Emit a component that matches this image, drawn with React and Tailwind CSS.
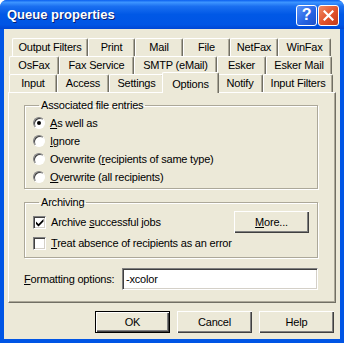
const rows = [
  {
    offset: "ml-[8px]",
    tabs: [
      { label: "Output Filters", w: "w-[76px]" },
      { label: "Print", w: "w-[47px]" },
      { label: "Mail", w: "w-[48px]" },
      { label: "File", w: "w-[47px]" },
      { label: "NetFax", w: "w-[48px]" },
      { label: "WinFax", w: "w-[53px]" },
    ],
  },
  {
    offset: "ml-[5px]",
    tabs: [
      { label: "OsFax", w: "w-[50px]" },
      { label: "Fax Service", w: "w-[75px]" },
      { label: "SMTP (eMail)", w: "w-[83px]" },
      { label: "Esker", w: "w-[49px]" },
      { label: "Esker Mail", w: "w-[66px]" },
    ],
  },
  {
    offset: "ml-[5px]",
    tabs: [
      { label: "Input", w: "w-[48px]" },
      { label: "Access", w: "w-[52px]" },
      { label: "Settings", w: "w-[55px]" },
      { label: "Options", w: "w-[57px]", active: true },
      { label: "Notify", w: "w-[46px]" },
      { label: "Input Filters", w: "w-[70px]" },
    ],
  },
];

const Tab = ({ label, w, active }) => {
  if (active) {
    return (
      <div
        className={`${w} relative z-10 -mx-[2px] -mt-[2px] flex h-[21px] shrink-0 items-start justify-center rounded-t-[2px] border-l border-t border-r border-l-white border-t-white border-r-[#716F64] bg-[#ECE9D8] pt-[3px] shadow-[inset_-1px_0_0_#ACA899]`}
      >
        {label}
      </div>
    );
  }
  return (
    <div
      className={`${w} flex h-[18px] shrink-0 items-center justify-center rounded-t-[2px] border-l border-t border-r border-l-white border-t-white border-r-[#716F64] bg-[#ECE9D8] shadow-[inset_-1px_0_0_#ACA899]`}
    >
      {label}
    </div>
  );
};

const Radio = ({ checked }) => (
  <span className="flex h-[12px] w-[12px] shrink-0 items-center justify-center rounded-full border border-t-[#808080] border-l-[#808080] border-r-white border-b-white bg-white shadow-[inset_1px_1px_0_#404040]">
    {checked && <span className="h-[4px] w-[4px] rounded-full bg-black" />}
  </span>
);

const Checkbox = ({ checked }) => (
  <span className="flex h-[13px] w-[13px] shrink-0 items-center justify-center border border-t-[#808080] border-l-[#808080] border-r-white border-b-white bg-white shadow-[inset_1px_1px_0_#404040,inset_-1px_-1px_0_#D4D0C8]">
    {checked && (
      <svg width="9" height="9" viewBox="0 0 9 9">
        <path d="M1 3.5v2.5l2.5 2.5 5-5V1L3.5 6z" fill="#000" />
      </svg>
    )}
  </span>
);

const Button = ({ children, isDefault }) => (
  <button
    className={`flex h-[22px] w-[75px] items-center justify-center bg-[#ECE9D8] pt-[1px] ${
      isDefault
        ? "border border-black shadow-[inset_1px_1px_0_#fff,inset_-1px_-1px_0_#404040,inset_-2px_-2px_0_#808080]"
        : "shadow-[inset_1px_1px_0_#fff,inset_-1px_-1px_0_#404040,inset_-2px_-2px_0_#808080]"
    }`}
  >
    {children}
  </button>
);

const GroupBox = ({ title, className, children }) => (
  <fieldset
    className={`ml-[15px] w-[294px] border border-[#ACA899] shadow-[1px_1px_0_#fff,inset_1px_1px_0_#fff] ${className}`}
  >
    <legend className="ml-[6px] px-[2px] leading-[13px]">{title}</legend>
    {children}
  </fieldset>
);

export default function App() {
  return (
    <div className="flex h-[343px] w-[344px] flex-col rounded-t-[7px] bg-[#0055E5] font-['Liberation_Sans',Arial,sans-serif] text-[11px] tracking-[-0.2px] text-black">
      <div className="flex h-[29px] shrink-0 items-center rounded-t-[7px] bg-[linear-gradient(to_bottom,#0A5FEF_0%,#3D95FF_8%,#1A6FF0_22%,#0058E6_50%,#0055E5_85%,#0046D4_100%)] pl-[7px] pr-[5px]">
        <span className="text-[13px] font-bold tracking-normal text-white [text-shadow:1px_1px_0_#0A1E70]">
          Queue properties
        </span>
        <div className="ml-auto flex gap-[1px] pt-[1px]">
          <div className="flex h-[21px] w-[21px] items-center justify-center rounded-[3px] border border-white bg-[linear-gradient(135deg,#5B95FA,#2462E2_60%,#1E50C8)] text-[16px] font-bold text-white">
            ?
          </div>
          <div className="flex h-[21px] w-[21px] items-center justify-center rounded-[3px] border border-white bg-[linear-gradient(135deg,#F08A64,#E1522A_55%,#C4391A)]">
            <svg width="11" height="11" viewBox="0 0 11 11">
              <path d="M1.5 1.5l8 8M9.5 1.5l-8 8" stroke="#fff" strokeWidth="2.2" strokeLinecap="square" />
            </svg>
          </div>
        </div>
      </div>

      <div className="mx-[4px] mb-[4px] flex flex-1 flex-col bg-[#ECE9D8] pt-[9px]">
        <div className="flex flex-col">
          {rows.map((row, i) => (
            <div key={i} className={`flex h-[18px] ${row.offset}`}>
              {row.tabs.map((t) => (
                <Tab key={t.label} {...t} />
              ))}
            </div>
          ))}
        </div>

        <div className="mx-[4px] flex h-[211px] flex-col border border-l-white border-t-white border-r-[#716F64] border-b-[#716F64] pt-[6px] shadow-[inset_-1px_-1px_0_#ACA899]">
          <GroupBox title="Associated file entries" className="pb-[2px] pl-[8px] pt-[2px]">
            <div className="flex h-[18px] items-center gap-[5px]">
              <Radio checked />
              <span>
                <span className="underline">A</span>s well as
              </span>
            </div>
            <div className="flex h-[18px] items-center gap-[5px]">
              <Radio />
              <span>
                <span className="underline">I</span>gnore
              </span>
            </div>
            <div className="flex h-[18px] items-center gap-[5px]">
              <Radio />
              <span>
                Overwrite (<span className="underline">r</span>ecipients of same type)
              </span>
            </div>
            <div className="flex h-[18px] items-center gap-[5px]">
              <Radio />
              <span>
                <span className="underline">O</span>verwrite (all recipients)
              </span>
            </div>
          </GroupBox>

          <GroupBox title="Archiving" className="mt-[7px] pb-[3px] pl-[8px] pr-[8px] pt-[2px]">
            <div className="flex h-[22px] items-center gap-[5px]">
              <Checkbox checked />
              <span>
                Archive <span className="underline">s</span>uccessful jobs
              </span>
              <div className="ml-auto">
                <Button>
                  <span className="underline">M</span>ore...
                </Button>
              </div>
            </div>
            <div className="flex h-[21px] items-center gap-[5px]">
              <Checkbox />
              <span>
                <span className="underline">T</span>reat absence of recipients as an error
              </span>
            </div>
          </GroupBox>

          <div className="ml-[15px] mt-[10px] flex w-[294px] items-center">
            <span>
              <span className="underline">F</span>ormatting options:
            </span>
            <div className="ml-auto flex h-[22px] w-[196px] items-center border border-t-[#808080] border-l-[#808080] border-r-white border-b-white bg-white pl-[3px] shadow-[inset_1px_1px_0_#404040,inset_-1px_-1px_0_#D4D0C8]">
              -xcolor
            </div>
          </div>
        </div>

        <div className="mt-[8px] flex justify-end gap-[7px] pr-[6px]">
          <Button isDefault>OK</Button>
          <Button>Cancel</Button>
          <Button>Help</Button>
        </div>
      </div>
    </div>
  );
}
